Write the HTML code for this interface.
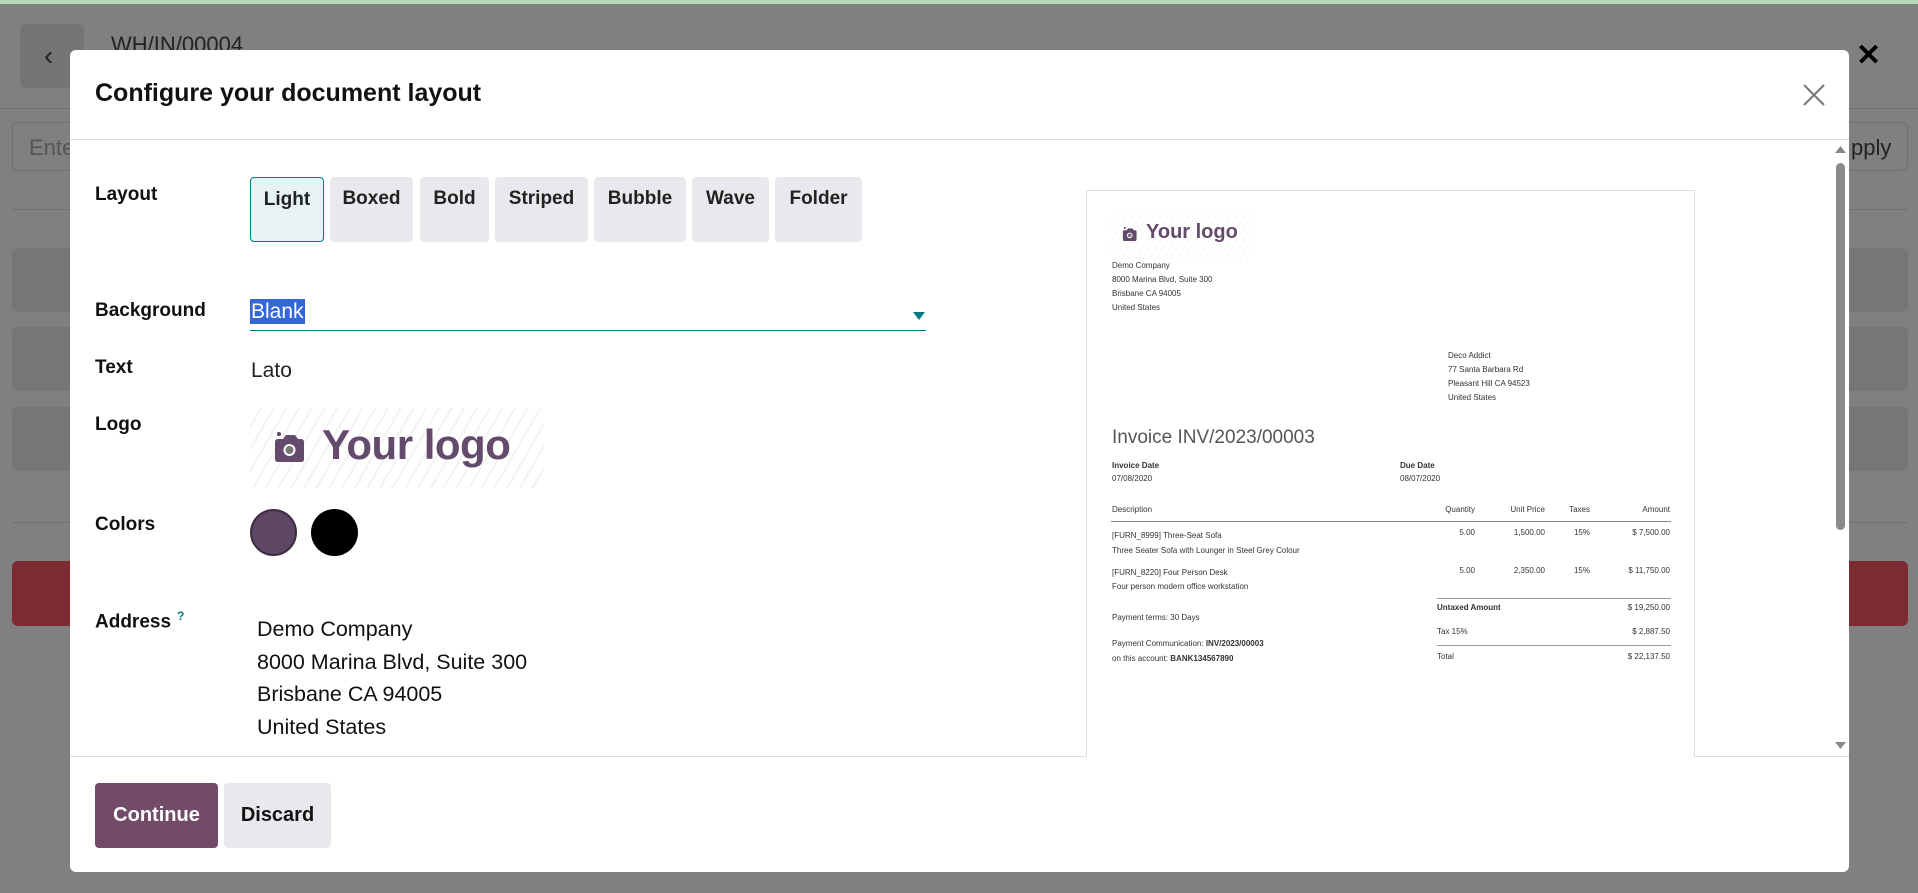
<!DOCTYPE html>
<html><head><meta charset="utf-8"><style>
*{margin:0;padding:0;box-sizing:border-box}
body{width:1918px;height:893px;overflow:hidden;background:#808080;font-family:"Liberation Sans",sans-serif;position:relative;color:#111}
.a{position:absolute}
.bg{background:#747677;border-radius:6px}
.lbl{position:absolute;left:95px;font-size:19px;font-weight:bold;color:#111}
.btn{position:absolute;top:177px;height:65px;background:#e7e9ed;border-radius:4px;font-size:19px;font-weight:bold;text-align:center;padding-top:11px;color:#222}
.inv{position:absolute;font-size:8px;line-height:10px;color:#333;white-space:nowrap}
.r{text-align:right}
</style></head><body>
<div class="a" style="left:0;top:0;width:1918px;height:4px;background:#b9d9b6"></div>
<div class="a bg" style="left:20px;top:24px;width:64px;height:64px;background:#757575"></div>
<div class="a" style="left:44px;top:40px;font-size:28px;color:#222">‹</div>
<div class="a" style="left:111px;top:32px;font-size:22px;color:#222">WH/IN/00004</div>
<div class="a" style="left:1856px;top:38px;font-size:30px;font-weight:bold;color:#000">✕</div>
<div class="a" style="left:0;top:108px;width:1918px;height:1px;background:#6f6f6f"></div>
<div class="a" style="left:12px;top:122px;width:80px;height:49px;border:1px solid #6f6f6f;border-radius:4px;font-size:22px;color:#555;padding:12px 0 0 16px">Ente</div>
<div class="a" style="left:1840px;top:122px;width:68px;height:49px;border:1px solid #6f6f6f;border-radius:6px;font-size:22px;color:#222;padding:12px 0 0 10px">pply</div>
<div class="a" style="left:12px;top:209px;width:1896px;height:1px;background:#6f6f6f"></div>
<div class="a bg" style="left:12px;top:248px;width:1896px;height:64px"></div>
<div class="a bg" style="left:12px;top:327px;width:1896px;height:64px"></div>
<div class="a bg" style="left:12px;top:407px;width:1896px;height:64px"></div>
<div class="a" style="left:12px;top:522px;width:1896px;height:1px;background:#6f6f6f"></div>
<div class="a" style="left:12px;top:561px;width:1896px;height:65px;background:#7c2b33;border-radius:6px"></div>

<div class="a" style="left:70px;top:50px;width:1779px;height:822px;background:#fff;border-radius:6px;overflow:hidden">
 <div class="a" style="left:25px;top:29px;font-size:25px;font-weight:bold;color:#111">Configure your document layout</div>
 <svg class="a" style="left:1733px;top:34px" width="22" height="22" viewBox="0 0 22 22"><path d="M1 1L21 21M21 1L1 21" stroke="#777" stroke-width="2"/></svg>
 <div class="a" style="left:0;top:89px;width:1779px;height:1px;background:#dcdcdc"></div>
 <div class="a" style="left:0;top:706px;width:1779px;height:1px;background:#dcdcdc"></div>
</div>
<div class="lbl" style="top:184px">Layout</div>
<div class="btn" style="left:250px;width:74px;background:#e6f2f3;border:1px solid #017e84">Light</div>
<div class="btn" style="left:330px;width:83px">Boxed</div>
<div class="btn" style="left:420px;width:69px">Bold</div>
<div class="btn" style="left:495px;width:93px">Striped</div>
<div class="btn" style="left:594px;width:92px">Bubble</div>
<div class="btn" style="left:692px;width:77px">Wave</div>
<div class="btn" style="left:775px;width:87px">Folder</div>

<div class="lbl" style="top:300px">Background</div>
<div class="a" style="left:250px;top:299px;height:25px;background:#3367d6;color:#fff;font-size:21px;padding:0 1px;line-height:25px">Blank</div>
<div class="a" style="left:250px;top:330px;width:676px;height:1px;background:#017e84"></div>
<svg class="a" style="left:913px;top:312px" width="12" height="8"><path d="M0 0H12L6 8Z" fill="#017e84"/></svg>

<div class="lbl" style="top:357px">Text</div>
<div class="a" style="left:251px;top:359px;font-size:21px;color:#222">Lato</div>

<div class="lbl" style="top:414px">Logo</div>
<div class="a" style="left:250px;top:408px;width:294px;height:80px;background:repeating-linear-gradient(-60deg,#fff 0 9px,#f3f3f3 9px 11px)"></div>
<svg class="a" style="left:271px;top:430px" width="36" height="34" viewBox="0 0 36 34"><path d="M6 4H10M8 2V6" stroke="#654b6b" stroke-width="2.5"/><path d="M4 12Q4 9 7 9H12L15 5H24L27 9H30Q33 9 33 12V29Q33 32 30 32H7Q4 32 4 29Z" fill="#654b6b"/><circle cx="18.5" cy="20" r="6" fill="#fff"/><circle cx="18.5" cy="20" r="4" fill="#777"/></svg>
<div class="a" style="left:322px;top:421px;font-size:42px;font-weight:bold;color:#654b6b;letter-spacing:-0.5px">Your logo</div>

<div class="lbl" style="top:514px">Colors</div>
<div class="a" style="left:250px;top:509px;width:47px;height:47px;border-radius:50%;background:#5e4665;border:2px solid #3d2b42"></div>
<div class="a" style="left:311px;top:509px;width:47px;height:47px;border-radius:50%;background:#000"></div>

<div class="lbl" style="top:609px">Address<sup style="font-size:12px;color:#017e84;margin-left:6px">?</sup></div>
<div class="a" style="left:257px;top:613px;font-size:21.5px;line-height:32.5px;color:#111">Demo Company<br>8000 Marina Blvd, Suite 300<br>Brisbane CA 94005<br>United States</div>

<div class="a" style="left:95px;top:783px;width:123px;height:65px;background:#714b67;border-radius:4px;color:#fff;font-size:20px;font-weight:bold;text-align:center;line-height:65px">Continue</div>
<div class="a" style="left:224px;top:783px;width:107px;height:65px;background:#e7e9ed;border-radius:4px;color:#111;font-size:20px;font-weight:bold;text-align:center;line-height:65px">Discard</div>

<svg class="a" style="left:1834px;top:145px" width="13" height="9"><path d="M1 8L6.5 1L12 8Z" fill="#888"/></svg>
<div class="a" style="left:1836px;top:163px;width:9px;height:367px;background:#8a8a8a;border-radius:5px"></div>
<svg class="a" style="left:1834px;top:741px" width="13" height="9"><path d="M1 1L6.5 8L12 1Z" fill="#888"/></svg>

<div class="a" style="left:1086px;top:190px;width:609px;height:567px;border:1px solid #ddd;border-bottom:none;background:#fff"></div>
<div class="a" style="left:1111px;top:214px;width:142px;height:45px;background:repeating-linear-gradient(-60deg,#fff 0 5px,#f7f7f7 5px 6px)"></div>
<svg class="a" style="left:1121px;top:226px" width="17" height="16" viewBox="0 0 36 34"><path d="M6 4H10M8 2V6" stroke="#654b6b" stroke-width="3"/><path d="M4 12Q4 9 7 9H12L15 5H24L27 9H30Q33 9 33 12V29Q33 32 30 32H7Q4 32 4 29Z" fill="#654b6b"/><circle cx="18.5" cy="20" r="6" fill="#fff"/><circle cx="18.5" cy="20" r="4" fill="#777"/></svg>
<div class="a" style="left:1146px;top:221px;font-size:20px;font-weight:bold;color:#654b6b">Your logo</div>
<div class="inv" style="left:1112px;top:259px;line-height:14px">Demo Company<br>8000 Marina Blvd, Suite 300<br>Brisbane CA 94005<br>United States</div>
<div class="inv" style="left:1448px;top:349px;line-height:14px">Deco Addict<br>77 Santa Barbara Rd<br>Pleasant Hill CA 94523<br>United States</div>
<div class="inv" style="left:1112px;top:427px;font-size:19px;line-height:22px;color:#555">Invoice INV/2023/00003</div>
<div class="inv" style="left:1112px;top:459px;line-height:13px"><b>Invoice Date</b><br>07/08/2020</div>
<div class="inv" style="left:1400px;top:459px;line-height:13px"><b>Due Date</b><br>08/07/2020</div>
<div class="inv" style="left:1112px;top:505px">Description</div>
<div class="inv r" style="left:1415px;width:60px;top:505px">Quantity</div>
<div class="inv r" style="left:1485px;width:60px;top:505px">Unit Price</div>
<div class="inv r" style="left:1550px;width:40px;top:505px">Taxes</div>
<div class="inv r" style="left:1600px;width:70px;top:505px">Amount</div>
<div class="a" style="left:1111px;top:521px;width:560px;height:1px;background:#888"></div>
<div class="inv" style="left:1112px;top:528px;line-height:15px">[FURN_8999] Three-Seat Sofa<br>Three Seater Sofa with Lounger in Steel Grey Colour</div>
<div class="inv r" style="left:1415px;width:60px;top:528px">5.00</div>
<div class="inv r" style="left:1485px;width:60px;top:528px">1,500.00</div>
<div class="inv r" style="left:1550px;width:40px;top:528px">15%</div>
<div class="inv r" style="left:1600px;width:70px;top:528px">$ 7,500.00</div>
<div class="inv" style="left:1112px;top:566px;line-height:14px">[FURN_8220] Four Person Desk<br>Four person modern office workstation</div>
<div class="inv r" style="left:1415px;width:60px;top:566px">5.00</div>
<div class="inv r" style="left:1485px;width:60px;top:566px">2,350.00</div>
<div class="inv r" style="left:1550px;width:40px;top:566px">15%</div>
<div class="inv r" style="left:1600px;width:70px;top:566px">$ 11,750.00</div>
<div class="a" style="left:1437px;top:598px;width:234px;height:1px;background:#999"></div>
<div class="inv" style="left:1437px;top:603px"><b>Untaxed Amount</b></div>
<div class="inv r" style="left:1590px;width:80px;top:603px">$ 19,250.00</div>
<div class="inv" style="left:1437px;top:627px">Tax 15%</div>
<div class="inv r" style="left:1590px;width:80px;top:627px">$ 2,887.50</div>
<div class="a" style="left:1437px;top:645px;width:234px;height:1px;background:#999"></div>
<div class="inv" style="left:1437px;top:652px">Total</div>
<div class="inv r" style="left:1590px;width:80px;top:652px">$ 22,137.50</div>
<div class="inv" style="left:1112px;top:613px">Payment terms: 30 Days</div>
<div class="inv" style="left:1112px;top:636px;line-height:15px">Payment Communication: <b>INV/2023/00003</b><br>on this account: <b>BANK134567890</b></div>
</body></html>
